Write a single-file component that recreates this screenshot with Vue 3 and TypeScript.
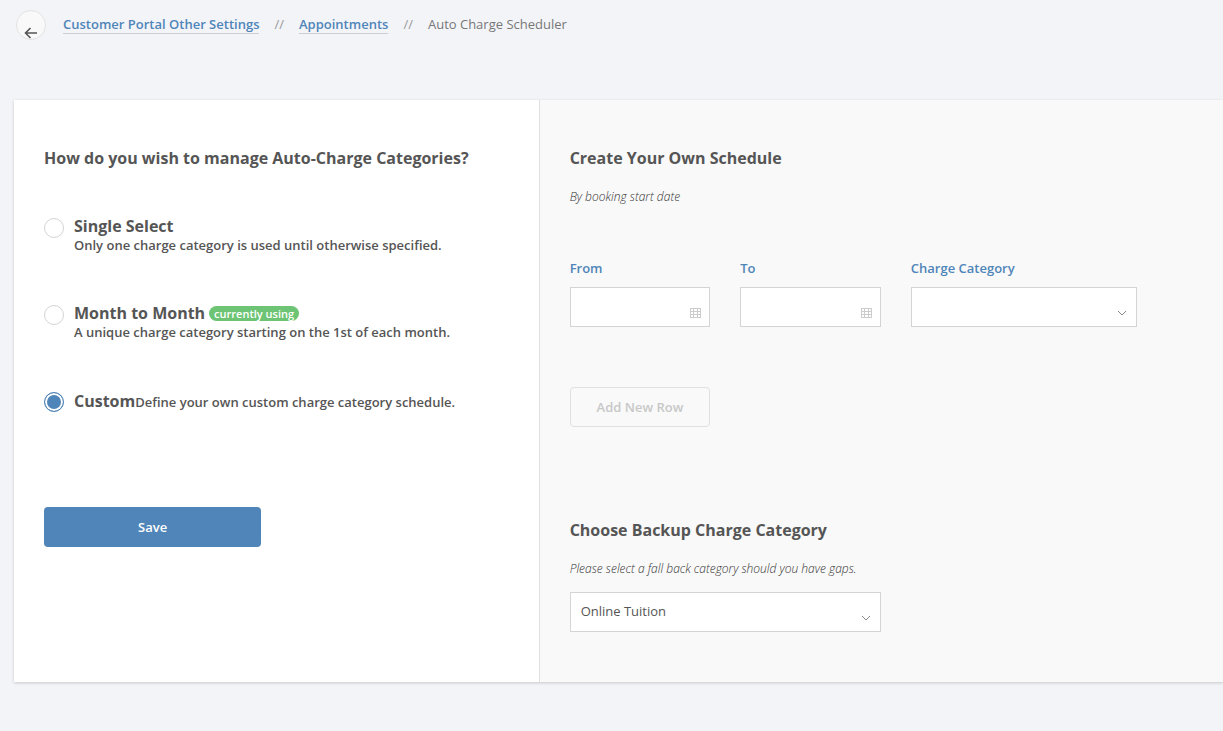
<script setup lang="ts">
import { ref } from 'vue'

interface Crumb {
  label: string
  href?: string
}

interface ScheduleOption {
  value: string
  title: string
  description: string
  current?: boolean
  inline?: boolean
}

const crumbs: Crumb[] = [
  { label: 'Customer Portal Other Settings', href: '#settings' },
  { label: 'Appointments', href: '#appointments' },
  { label: 'Auto Charge Scheduler' },
]

const options: ScheduleOption[] = [
  {
    value: 'single',
    title: 'Single Select',
    description: 'Only one charge category is used until otherwise specified.',
  },
  {
    value: 'monthly',
    title: 'Month to Month',
    description: 'A unique charge category starting on the 1st of each month.',
    current: true,
  },
  {
    value: 'custom',
    title: 'Custom',
    description: 'Define your own custom charge category schedule.',
    inline: true,
  },
]

const mode = ref('custom')
const from = ref('')
const to = ref('')
const category = ref('')
const backup = ref('Online Tuition')
</script>

<template>
  <div class="page">
    <header class="topbar">
      <button class="back" type="button" aria-label="Back">
        <svg width="14" height="12" viewBox="0 0 14 12" aria-hidden="true">
          <path d="M13 6H2M6.5 1L1.5 6l5 5" />
        </svg>
      </button>
      <nav class="crumbs" aria-label="Breadcrumb">
        <template v-for="(crumb, i) in crumbs" :key="crumb.label">
          <span v-if="i > 0" class="separator">//</span>
          <a v-if="crumb.href" class="crumb-link" :href="crumb.href">{{ crumb.label }}</a>
          <span v-else class="crumb-current">{{ crumb.label }}</span>
        </template>
      </nav>
    </header>

    <main class="panel">
      <form class="pane choices" @submit.prevent>
        <h2 id="mode-heading" class="heading">How do you wish to manage Auto-Charge Categories?</h2>
        <div class="options" role="radiogroup" aria-labelledby="mode-heading">
          <label v-for="option in options" :key="option.value" class="option">
            <input v-model="mode" class="radio" type="radio" name="mode" :value="option.value" />
            <span class="option-text" :class="{ inline: option.inline }">
              <span class="option-head">
                <span class="option-title">{{ option.title }}</span>
                <span v-if="option.current" class="badge">currently using</span>
              </span>
              <span class="option-description">{{ option.description }}</span>
            </span>
          </label>
        </div>
        <div class="actions">
          <button class="save" type="submit">Save</button>
        </div>
      </form>

      <section class="pane schedule">
        <h2 class="heading">Create Your Own Schedule</h2>
        <p class="hint">By booking start date</p>

        <div class="grid fields">
          <div class="span-2">
            <label class="label" for="from">From</label>
            <div class="control">
              <input id="from" v-model="from" class="field" type="text" />
              <svg class="calendar" width="11" height="10" viewBox="0 0 11 10" aria-hidden="true">
                <path d="M0 .5h11M0 3.5h11M0 6.5h11M0 9.5h11M.5 0v10M3.5 0v10M7.5 0v10M10.5 0v10" />
              </svg>
            </div>
          </div>
          <div class="span-2">
            <label class="label" for="to">To</label>
            <div class="control">
              <input id="to" v-model="to" class="field" type="text" />
              <svg class="calendar" width="11" height="10" viewBox="0 0 11 10" aria-hidden="true">
                <path d="M0 .5h11M0 3.5h11M0 6.5h11M0 9.5h11M.5 0v10M3.5 0v10M7.5 0v10M10.5 0v10" />
              </svg>
            </div>
          </div>
          <div class="span-3">
            <label class="label" for="category">Charge Category</label>
            <div class="control">
              <select id="category" v-model="category" class="field">
                <option value=""></option>
                <option>Online Tuition</option>
              </select>
              <svg class="chevron" width="10" height="6" viewBox="0 0 10 6" aria-hidden="true">
                <path d="M1 1l4 4 4-4" />
              </svg>
            </div>
          </div>
        </div>

        <div class="grid add">
          <button class="add-row span-2" type="button" disabled>Add New Row</button>
        </div>

        <h2 id="backup-heading" class="heading">Choose Backup Charge Category</h2>
        <p class="hint">Please select a fall back category should you have gaps.</p>
        <div class="grid backup">
          <div class="control span-4">
            <select v-model="backup" class="field" aria-labelledby="backup-heading">
              <option>Online Tuition</option>
            </select>
            <svg class="chevron" width="10" height="6" viewBox="0 0 10 6" aria-hidden="true">
              <path d="M1 1l4 4 4-4" />
            </svg>
          </div>
        </div>
      </section>
    </main>
  </div>
</template>

<style>
body {
  margin: 0;
  background: #f3f4f8;
  overflow-x: hidden;
}
</style>

<style scoped>
.page {
  box-sizing: border-box;
  min-height: 100vh;
  font-family: 'Open Sans', 'Noto Sans', sans-serif;
  font-size: 13px;
  line-height: 20px;
  color: #555;
}

.topbar {
  display: flex;
  align-items: flex-start;
  gap: 17px;
  padding: 10px 16px 60px;
}

.back {
  display: flex;
  align-items: flex-end;
  justify-content: center;
  box-sizing: border-box;
  width: 30px;
  height: 30px;
  padding: 0;
  border: 1px solid #e3e3e3;
  border-radius: 50%;
  background: #f9f9f9;
}

.back svg {
  fill: none;
  stroke: #555;
  stroke-width: 1.6;
}

.crumbs {
  display: flex;
  gap: 15px;
  padding-top: 4px;
}

.crumb-link {
  height: 19px;
  border-bottom: 1px solid #ccced4;
  color: #4f85b8;
  font-weight: 600;
  text-decoration: none;
}

.separator {
  color: #999;
}

.crumb-current {
  color: #777;
}

.panel {
  display: grid;
  grid-template-columns: 10fr 13fr;
  margin-left: 14px;
  background: #fff;
  box-shadow: 0 1px 3px rgba(0, 0, 0, 0.18);
}

.pane {
  box-sizing: border-box;
  padding: 46px 1px 50px 30px;
}

.choices {
  padding-right: 30px;
  border-right: 1px solid #e0e0e0;
}

.schedule {
  background: #f9f9f9;
}

.heading {
  margin: 0;
  font-size: 16px;
  font-weight: 700;
  line-height: 24px;
}

.options {
  display: flex;
  flex-direction: column;
  gap: 49px;
  margin-top: 46px;
}

.option {
  display: flex;
  gap: 10px;
}

.radio {
  appearance: none;
  flex: none;
  box-sizing: border-box;
  width: 20px;
  height: 20px;
  margin: 2px 0 0;
  border: 1px solid #d4d4d4;
  border-radius: 50%;
  background: #fff;
}

.radio:checked {
  border-color: #4f85b8;
  background: #4f85b8;
  box-shadow: inset 0 0 0 2px #fff;
}

.option-text {
  display: flex;
  flex-direction: column;
}

.option-text.inline {
  flex-direction: row;
  align-items: baseline;
  line-height: 22px;
}

.option-head {
  display: flex;
  align-items: center;
  gap: 4px;
}

.option-title {
  font-size: 16px;
  font-weight: 700;
}

.option-description {
  font-weight: 600;
  line-height: 18px;
}

.badge {
  padding: 0 5px;
  border-radius: 8px;
  background: #6cc474;
  color: #fff;
  font-size: 11px;
  font-weight: 600;
  line-height: 15px;
}

.actions {
  display: grid;
  grid-template-columns: 1fr 1fr;
  gap: 30px;
  margin-top: 95px;
}

.save,
.add-row {
  height: 40px;
  border-radius: 4px;
  font: inherit;
  font-weight: 600;
}

.save {
  border: 0;
  background: #4f85b8;
  color: #fff;
}

.hint {
  margin: 18px 0 0;
  color: #333;
  font-size: 12px;
  font-weight: 300;
  font-style: italic;
  line-height: 18px;
}

.grid {
  display: grid;
  grid-template-columns: repeat(8, minmax(0, 1fr));
  column-gap: 30px;
}

.span-2 {
  grid-column: span 2;
}

.span-3 {
  grid-column: span 3;
}

.span-4 {
  grid-column: span 4;
}

.fields {
  margin-top: 52px;
}

.label {
  display: block;
  margin-bottom: 9px;
  color: #4f85b8;
  font-weight: 600;
}

.control {
  position: relative;
}

.field {
  appearance: none;
  display: block;
  box-sizing: border-box;
  width: 100%;
  height: 40px;
  padding: 0 30px 2px 10px;
  border: 1px solid #d4d4d4;
  border-radius: 0;
  background: #fff;
  color: #555;
  font: inherit;
}

.calendar,
.chevron {
  position: absolute;
  fill: none;
  pointer-events: none;
}

.calendar {
  right: 9px;
  bottom: 9px;
  stroke: #ccc;
}

.chevron {
  right: 10px;
  bottom: 11px;
  stroke: #888;
}

.add {
  margin: 60px 0 91px;
}

.add-row {
  border: 1px solid #e0e0e0;
  background: transparent;
  color: #c8c8c8;
}

.backup {
  margin-top: 14px;
}
</style>
